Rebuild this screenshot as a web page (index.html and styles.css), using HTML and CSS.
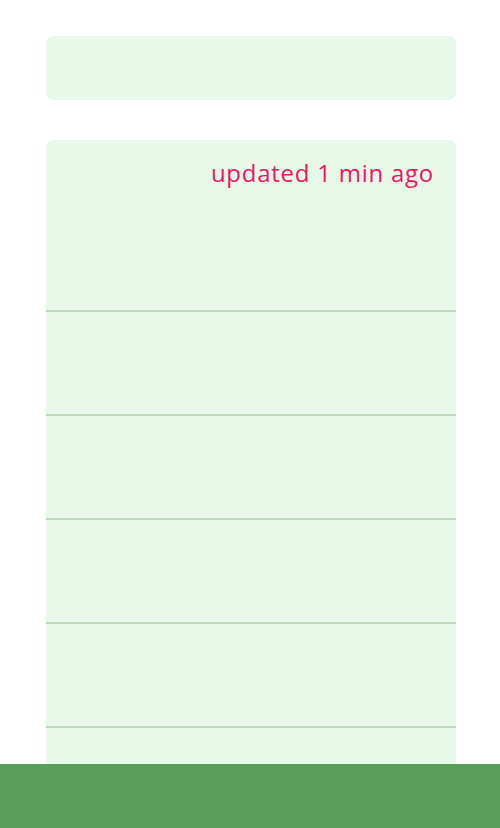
FILE: index.html
```html
<!DOCTYPE html>
<html>
<head>
<meta charset="utf-8">
<link rel="stylesheet" href="styles.css">
</head>
<body>
<main class="page">
  <section class="card card-top"></section>
  <section class="card card-list">
    <div class="list-head">
      <span class="updated">updated 1 min ago</span>
    </div>
    <div class="row"></div>
    <div class="row"></div>
    <div class="row"></div>
    <div class="row"></div>
    <div class="row"></div>
    <div class="row"></div>
  </section>
</main>
<footer class="bottom-bar"></footer>
</body>
</html>
```
FILE: styles.css
```css
html, body {
  margin: 0;
  padding: 0;
  background: #ffffff;
  font-family: "Open Sans", "Liberation Sans", sans-serif;
}
.page {
  padding: 36px 44px 0 46px;
  display: flex;
  flex-direction: column;
  gap: 40px;
}
.card {
  background: #e7f8e9;
  border-radius: 8px;
}
.card-top {
  height: 64px;
}
.card-list {
  display: flex;
  flex-direction: column;
  border-bottom-left-radius: 0;
  border-bottom-right-radius: 0;
}
.list-head {
  height: 172px;
  box-sizing: border-box;
  border-bottom: 2px solid #bed8be;
  display: flex;
  justify-content: flex-end;
  align-items: flex-start;
  padding: 0 22px 0 0;
}
.updated {
  color: #f01560;
  font-size: 24px;
  line-height: 1;
  margin-top: 21px;
  letter-spacing: 0.75px;
}
.row {
  height: 104px;
  box-sizing: border-box;
  border-bottom: 2px solid #bed8be;
}
.bottom-bar {
  position: fixed;
  left: 0;
  right: 0;
  bottom: 0;
  height: 64px;
  background: #589e58;
}
```
